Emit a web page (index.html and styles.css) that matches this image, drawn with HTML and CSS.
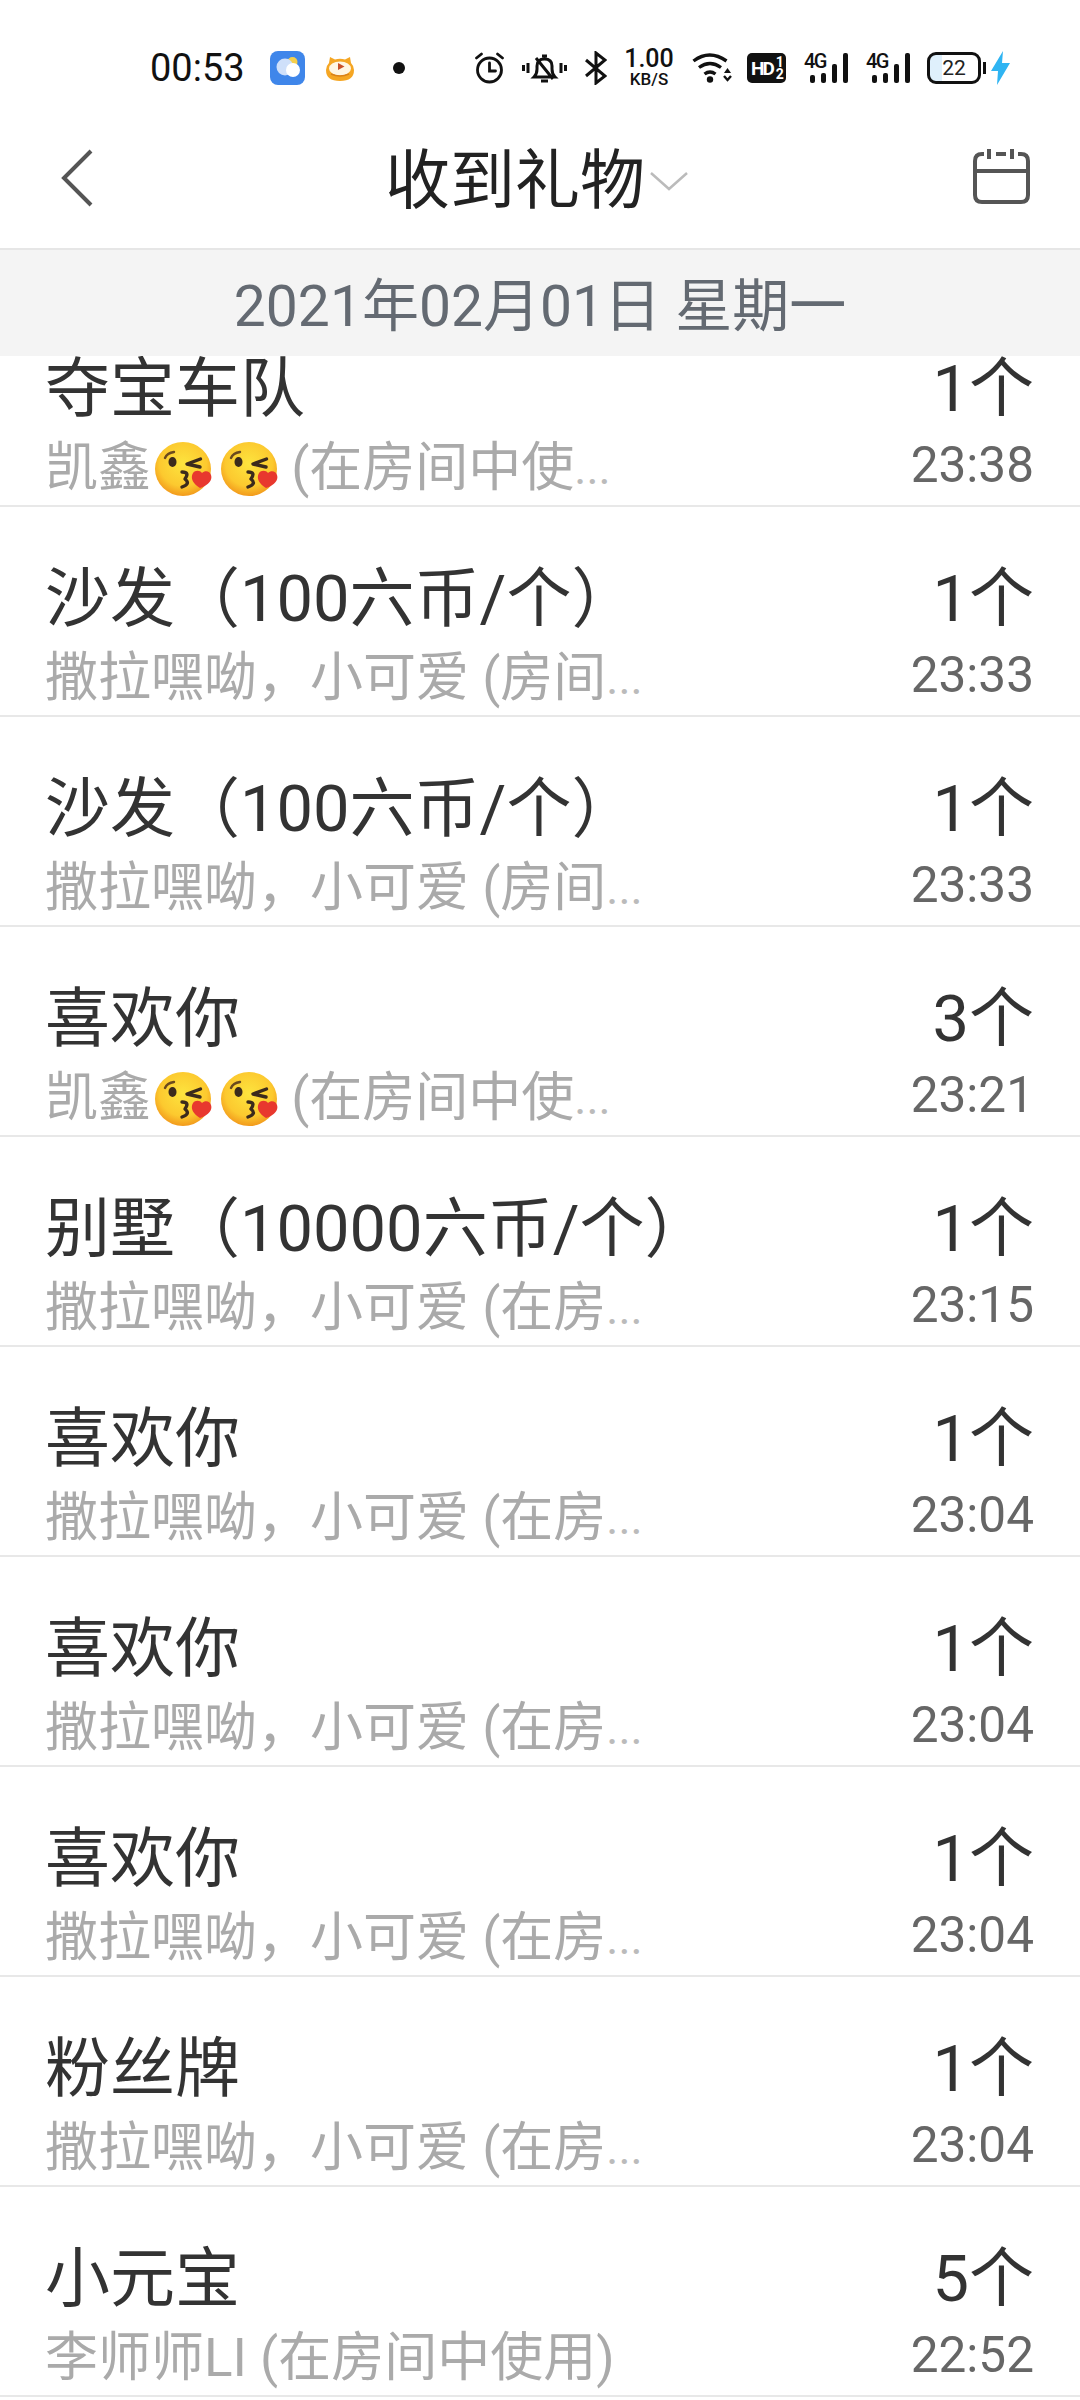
FILE: index.html
```html
<!DOCTYPE html>
<html lang="zh-CN">

<head>
  <meta charset="utf-8" />
  <meta name="viewport" content="width=device-width, initial-scale=1" />
  <title>收到礼物</title>
  <link rel="stylesheet" href="styles.css">
</head>

<body>
  <!-- shared emoji -->
  <svg class="defs" width="0" height="0">
    <defs>
      <radialGradient id="kiss-face" cx="50%" cy="40%" r="60%">
        <stop offset="0" stop-color="#fde43e" />
        <stop offset="0.7" stop-color="#fcc92f" />
        <stop offset="1" stop-color="#f29a1c" />
      </radialGradient>
      <symbol id="kiss" viewBox="0 0 57 54">
        <ellipse cx="28" cy="27" rx="28" ry="27" fill="url(#kiss-face)" />
        <path d="M10 16q2-5 9-6" fill="none" stroke="#6b4a1e" stroke-width="2.400" stroke-linecap="round" />
        <ellipse cx="17.500" cy="20" rx="4" ry="5" fill="#3b2a1c" />
        <path d="M45.500 17L32 22l13 3" fill="none" stroke="#3b2a1c" stroke-width="3.400" stroke-linecap="round" stroke-linejoin="round" />
        <path d="M27 30q8 0 3 7 6 5-3 8" fill="none" stroke="#3b2a1c" stroke-width="3.400" stroke-linecap="round" stroke-linejoin="round" />
        <path d="M45 46C38 42 35 36 38 31c2-3 7-3 9 0 3-3 8-2 9 2 2 6-4 11-11 13z" fill="#e8382e" />
      </symbol>
    </defs>
  </svg>

  <div class="status">
    <span class="clock">00:53</span>
    <svg class="ic-weather" viewBox="0 0 35 34">
      <rect width="35" height="34" rx="8" fill="#3f86ea" />
      <circle cx="22.500" cy="11" r="5" fill="#f6cf4a" />
      <circle cx="15" cy="16" r="8.500" fill="#cfe0fa" />
      <circle cx="23" cy="19" r="7" fill="#fff" />
    </svg>
    <svg class="ic-tiger" viewBox="0 0 28 25">
      <path d="M4 1l5 2.500q5-1.500 10 0L24 1l1 6q3 3 3 7 0 11-14 11T0 14q0-4 3-7z" fill="#f5a623" />
      <ellipse cx="14" cy="12.500" rx="11" ry="7" fill="#fff6e4" />
      <path d="M12 7l6.500 3.500L12 14z" fill="#c8502a" />
      <path d="M5 18q9 4 18 0" fill="none" stroke="#d9821a" stroke-width="1.500" />
    </svg>
    <span class="dot"></span>

    <svg class="ic-alarm" viewBox="0 0 29 32" fill="none" stroke="#111" stroke-width="2.800">
      <circle cx="14.500" cy="18" r="12" />
      <path d="M14.500 11v8h6M1.500 6l5-4M27.500 6l-5-4" stroke-linecap="round" />
    </svg>
    <svg class="ic-bell" viewBox="0 0 45 32" fill="none" stroke="#111" stroke-width="3">
      <path d="M12 25q3-3 3-8v-3q0-7 7.500-7t7.500 7v3q0 5 3 8zM20 4h5M19 29h7M14 6l17 21" />
      <path d="M1.500 13v6M6 11v10M39 11v10M43.500 13v6" />
    </svg>
    <svg class="ic-bt" viewBox="0 0 22 34" fill="none" stroke="#111" stroke-width="3">
      <path d="M1 9l19 16-9 7V2l9 7L1 25" />
    </svg>
    <span class="speed"><b>1.00</b><i>KB/S</i></span>
    <svg class="ic-wifi" viewBox="0 0 41 30" fill="none" stroke="#111" stroke-width="3.400">
      <path d="M1.500 8q16-12 33 0M7 14.500q11-8 22 0M12.500 21q5.500-4 11 0" />
      <circle cx="18" cy="26.500" r="3.200" fill="#111" stroke="none" />
      <path d="M32 20l3.500-5 3.500 5z" fill="#111" stroke="none" />
      <path d="M32 23l3.500 4 3.500-4" stroke-width="2.400" />
    </svg>
    <span class="hd">HD<span class="hd-sim"><i>1</i><i>2</i></span></span>
    <span class="signal"><em>4G</em><span class="bars"><i class="b1"></i><i class="b2"></i><i class="b3"></i><i class="b4"></i></span></span>
    <span class="signal second"><em>4G</em><span class="bars"><i class="b1"></i><i class="b2"></i><i class="b3"></i><i class="b4"></i></span></span>
    <span class="battery"><span class="cell">22</span><span class="nub"></span></span>
    <svg class="ic-bolt" viewBox="0 0 19 34">
      <path d="M12 0L0 20h7l-1 14L19 12h-8z" fill="#2fb4f2" />
    </svg>
  </div>

  <header class="topbar">
    <svg class="ic-back" viewBox="0 0 32 58" fill="none" stroke="#555" stroke-width="4">
      <path d="M30 2L3 29l27 27" />
    </svg>
    <div class="title"><span>收到礼物</span>
      <svg class="ic-chev" viewBox="0 0 38 20" fill="none" stroke="#bbb" stroke-width="2.500">
        <path d="M1 2l18 16L37 2" />
      </svg>
    </div>
    <svg class="ic-cal" viewBox="0 0 58 56" fill="none" stroke="#555" stroke-width="4">
      <path d="M11 5H9Q2 5 2 12v34q0 7 7 7h39q7 0 7-7V12q0-7-7-7h-3M2 22h53M23 5h10" />
      <path d="M16 0v10M39 0v10" />
    </svg>
  </header>

  <div class="datebar">2021年02月01日 星期一</div>

  <ul class="list">
    <li class="row first">
      <div class="info">
        <p class="name">夺宝车队</p>
        <p class="sub">凯鑫<svg class="emoji"><use href="#kiss" /></svg><svg class="emoji"><use href="#kiss" /></svg> (在房间中使<span class="more">...</span></p>
      </div>
      <div class="meta"><p class="count">1个</p><p class="time">23:38</p></div>
    </li>
    <li class="row">
      <div class="info">
        <p class="name">沙发（100六币/个）</p>
        <p class="sub">撒拉嘿呦，小可爱 (房间<span class="more">...</span></p>
      </div>
      <div class="meta"><p class="count">1个</p><p class="time">23:33</p></div>
    </li>
    <li class="row">
      <div class="info">
        <p class="name">沙发（100六币/个）</p>
        <p class="sub">撒拉嘿呦，小可爱 (房间<span class="more">...</span></p>
      </div>
      <div class="meta"><p class="count">1个</p><p class="time">23:33</p></div>
    </li>
    <li class="row">
      <div class="info">
        <p class="name">喜欢你</p>
        <p class="sub">凯鑫<svg class="emoji"><use href="#kiss" /></svg><svg class="emoji"><use href="#kiss" /></svg> (在房间中使<span class="more">...</span></p>
      </div>
      <div class="meta"><p class="count">3个</p><p class="time">23:21</p></div>
    </li>
    <li class="row">
      <div class="info">
        <p class="name">别墅（10000六币/个）</p>
        <p class="sub">撒拉嘿呦，小可爱 (在房<span class="more">...</span></p>
      </div>
      <div class="meta"><p class="count">1个</p><p class="time">23:15</p></div>
    </li>
    <li class="row">
      <div class="info">
        <p class="name">喜欢你</p>
        <p class="sub">撒拉嘿呦，小可爱 (在房<span class="more">...</span></p>
      </div>
      <div class="meta"><p class="count">1个</p><p class="time">23:04</p></div>
    </li>
    <li class="row">
      <div class="info">
        <p class="name">喜欢你</p>
        <p class="sub">撒拉嘿呦，小可爱 (在房<span class="more">...</span></p>
      </div>
      <div class="meta"><p class="count">1个</p><p class="time">23:04</p></div>
    </li>
    <li class="row">
      <div class="info">
        <p class="name">喜欢你</p>
        <p class="sub">撒拉嘿呦，小可爱 (在房<span class="more">...</span></p>
      </div>
      <div class="meta"><p class="count">1个</p><p class="time">23:04</p></div>
    </li>
    <li class="row">
      <div class="info">
        <p class="name">粉丝牌</p>
        <p class="sub">撒拉嘿呦，小可爱 (在房<span class="more">...</span></p>
      </div>
      <div class="meta"><p class="count">1个</p><p class="time">23:04</p></div>
    </li>
    <li class="row">
      <div class="info">
        <p class="name">小元宝</p>
        <p class="sub">李师师LI (在房间中使用)</p>
      </div>
      <div class="meta"><p class="count">5个</p><p class="time">22:52</p></div>
    </li>
  </ul>
</body>

</html>
```

FILE: styles.css
```css
html,
body {
  margin: 0;
  padding: 0;
  height: 2400px;
  overflow: hidden;
}

body {
  background: #fff;
  font-family: Roboto, "Noto Sans CJK SC", sans-serif;
  color: #333;
}

p {
  margin: 0;
}

.defs {
  position: absolute;
}

/* status bar */
.status {
  box-sizing: border-box;
  height: 110px;
  padding: 26px 0 0 150px;
  display: flex;
  align-items: center;
  color: #111;
}

.status svg {
  flex: none;
  display: block;
}

.clock {
  width: 120px;
  font-size: 38px;
  line-height: 1;
}

.ic-weather {
  width: 35px;
  height: 34px;
}

.ic-tiger {
  width: 28px;
  height: 25px;
  margin-left: 21px;
}

.dot {
  width: 12px;
  height: 12px;
  margin: 0 70px 0 39px;
  border-radius: 50%;
  background: #111;
}

.ic-alarm {
  width: 29px;
  height: 32px;
}

.ic-bell {
  width: 45px;
  height: 32px;
  margin-left: 18px;
}

.ic-bt {
  width: 22px;
  height: 34px;
  margin-left: 18px;
}

.speed {
  width: 48px;
  margin-left: 18px;
  display: flex;
  flex-direction: column;
  align-items: center;
  line-height: 1;
}

.speed b {
  font-size: 25px;
  font-weight: 500;
  line-height: 22px;
}

.speed i {
  font-size: 17px;
  font-style: normal;
  font-weight: 500;
  line-height: 18px;
}

.ic-wifi {
  width: 41px;
  height: 30px;
  margin-left: 19px;
}

.hd {
  box-sizing: border-box;
  width: 39px;
  height: 30px;
  margin-left: 14px;
  padding-left: 4px;
  display: flex;
  align-items: center;
  border-radius: 5px;
  background: #111;
  color: #fff;
  font-size: 19px;
  font-weight: 700;
  letter-spacing: -2px;
}

.hd-sim {
  display: flex;
  flex-direction: column;
  margin-left: 3px;
  font-size: 14px;
  line-height: 12px;
  letter-spacing: 0;
}

.hd-sim i {
  font-style: normal;
}

.signal {
  position: relative;
  width: 44px;
  height: 30px;
  margin-left: 18px;
}

.signal em {
  position: absolute;
  left: 0;
  top: -1px;
  font-size: 20px;
  font-style: normal;
  font-weight: 500;
  letter-spacing: -1.5px;
  line-height: 18px;
}

.second {
  margin-left: 18px;
}

.bars {
  height: 30px;
  padding-left: 6px;
  display: flex;
  align-items: flex-end;
  gap: 5.5px;
}

.bars i {
  width: 5.5px;
  border-radius: 2px;
  background: #111;
}

.bars .b1 {
  height: 8px;
}

.bars .b2 {
  height: 10px;
}

.bars .b3 {
  height: 19px;
}

.bars .b4 {
  height: 30px;
}

.battery {
  margin-left: 17px;
  display: flex;
  align-items: center;
}

.cell {
  box-sizing: border-box;
  width: 54px;
  height: 32px;
  display: flex;
  align-items: center;
  justify-content: center;
  border: 3px solid #111;
  border-radius: 9px;
  background: linear-gradient(to right, #dff0fc 24%, #fff 24%);
  font-size: 21px;
  color: #222;
}

.nub {
  width: 3px;
  height: 12px;
  margin-left: 2px;
  background: #111;
}

.ic-bolt {
  width: 19px;
  height: 34px;
  margin-left: 5px;
}

/* title bar */
.topbar {
  box-sizing: border-box;
  height: 140px;
  padding: 0 49px 2px 61px;
  display: grid;
  grid-template-columns: 1fr auto 1fr;
  align-items: center;
  border-bottom: 2px solid #e6e6e6;
}

.ic-back {
  width: 32px;
  height: 58px;
}

.ic-cal {
  width: 58px;
  height: 56px;
  margin-bottom: 2px;
  justify-self: end;
}

.title {
  margin-right: 19px;
  padding-top: 6px;
  display: flex;
  align-items: center;
  gap: 5px;
  font-size: 65px;
  line-height: 80px;
  color: #222;
}

.ic-chev {
  width: 38px;
  height: 20px;
}

.datebar {
  box-sizing: border-box;
  height: 106px;
  padding-top: 4px;
  background: #f4f4f4;
  text-align: center;
  font-size: 57px;
  line-height: 106px;
  color: #646a72;
}

/* gift rows */
.list {
  height: 2044px;
  margin: 0;
  padding: 0;
  list-style: none;
  overflow: hidden;
}

.row {
  box-sizing: border-box;
  height: 210px;
  padding: 51px 46px 0 45px;
  display: flex;
  justify-content: space-between;
  border-bottom: 2px solid #e8e8e8;
}

.first {
  margin-top: -59px;
}

.name,
.count {
  font-size: 65px;
  line-height: 82px;
  color: #333;
}

.name {
  margin-bottom: 3px;
}

.sub {
  display: flex;
  align-items: center;
  white-space: pre;
  font-size: 53px;
  line-height: 71px;
  color: #aaa;
}

.more {
  font-size: 46px;
  color: #bbb;
}

.meta {
  text-align: right;
}

.time {
  margin-top: 1px;
  font-size: 49.500px;
  line-height: 69px;
  color: #666;
}

.emoji {
  width: 57px;
  height: 54px;
  margin-left: 4px;
  flex: none;
}

.emoji + .emoji {
  margin-left: 9px;
}
```
